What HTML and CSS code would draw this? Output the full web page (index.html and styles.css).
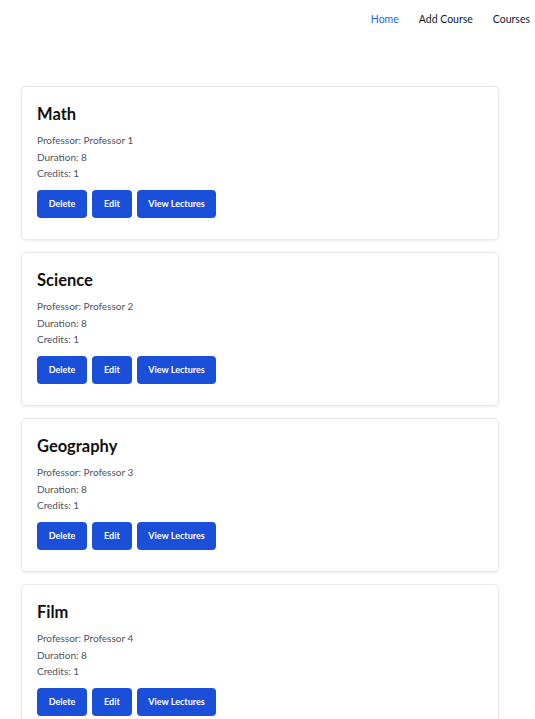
FILE: index.html
```html
<!DOCTYPE html>
<html>
<head>
<meta charset="utf-8">
<link rel="stylesheet" href="styles.css">
</head>
<body>
<nav class="nav">
  <a class="nav-link active">Home</a>
  <a class="nav-link">Add Course</a>
  <a class="nav-link">Courses</a>
</nav>
<main class="list">
  <div class="card">
    <h2 class="title">Math</h2>
    <p class="line">Professor: Professor 1</p>
    <p class="line">Duration: 8</p>
    <p class="line">Credits: 1</p>
    <div class="actions"><button class="btn btn-del">Delete</button><button class="btn btn-edit">Edit</button><button class="btn btn-view">View Lectures</button></div>
  </div>
  <div class="card">
    <h2 class="title">Science</h2>
    <p class="line">Professor: Professor 2</p>
    <p class="line">Duration: 8</p>
    <p class="line">Credits: 1</p>
    <div class="actions"><button class="btn btn-del">Delete</button><button class="btn btn-edit">Edit</button><button class="btn btn-view">View Lectures</button></div>
  </div>
  <div class="card">
    <h2 class="title">Geography</h2>
    <p class="line">Professor: Professor 3</p>
    <p class="line">Duration: 8</p>
    <p class="line">Credits: 1</p>
    <div class="actions"><button class="btn btn-del">Delete</button><button class="btn btn-edit">Edit</button><button class="btn btn-view">View Lectures</button></div>
  </div>
  <div class="card">
    <h2 class="title">Film</h2>
    <p class="line">Professor: Professor 4</p>
    <p class="line">Duration: 8</p>
    <p class="line">Credits: 1</p>
    <div class="actions"><button class="btn btn-del">Delete</button><button class="btn btn-edit">Edit</button><button class="btn btn-view">View Lectures</button></div>
  </div>
</main>
</body>
</html>
```
FILE: styles.css
```css
* { box-sizing: border-box; }
html, body { margin: 0; padding: 0; background: #fff; }
body { font-family: Lato, "Noto Sans", sans-serif; color: #111827; overflow: hidden; height: 719px; }
.nav { display: flex; justify-content: flex-end; gap: 20px; height: 38px; align-items: center; padding-right: 5px; }
.nav-link { font-size: 10.5px; color: #111827; }
.nav-link.active { color: #2563eb; }
.list { display: flex; flex-direction: column; gap: 12px; width: 478px; margin: 48px 0 0 21px; }
.card { border: 1px solid #e8e8e8; border-radius: 5px; box-shadow: 0 1px 3px rgba(0,0,0,0.08); padding: 15px 15px 21.5px; }
.title { margin: 0 0 6px; font-size: 16.5px; line-height: 24px; font-weight: 700; color: #111; }
.line { margin: 0; font-size: 10px; line-height: 16.5px; color: #4b5563; }
.actions { display: flex; gap: 5px; margin-top: 8px; }
.btn { border: none; background: #1a4fd9; color: #fff; font-family: inherit; font-weight: 700; font-size: 9px; height: 28px; border-radius: 4px; padding: 0; }
.btn-del { width: 50px; }
.btn-edit { width: 40px; }
.btn-view { width: 79px; }
```
